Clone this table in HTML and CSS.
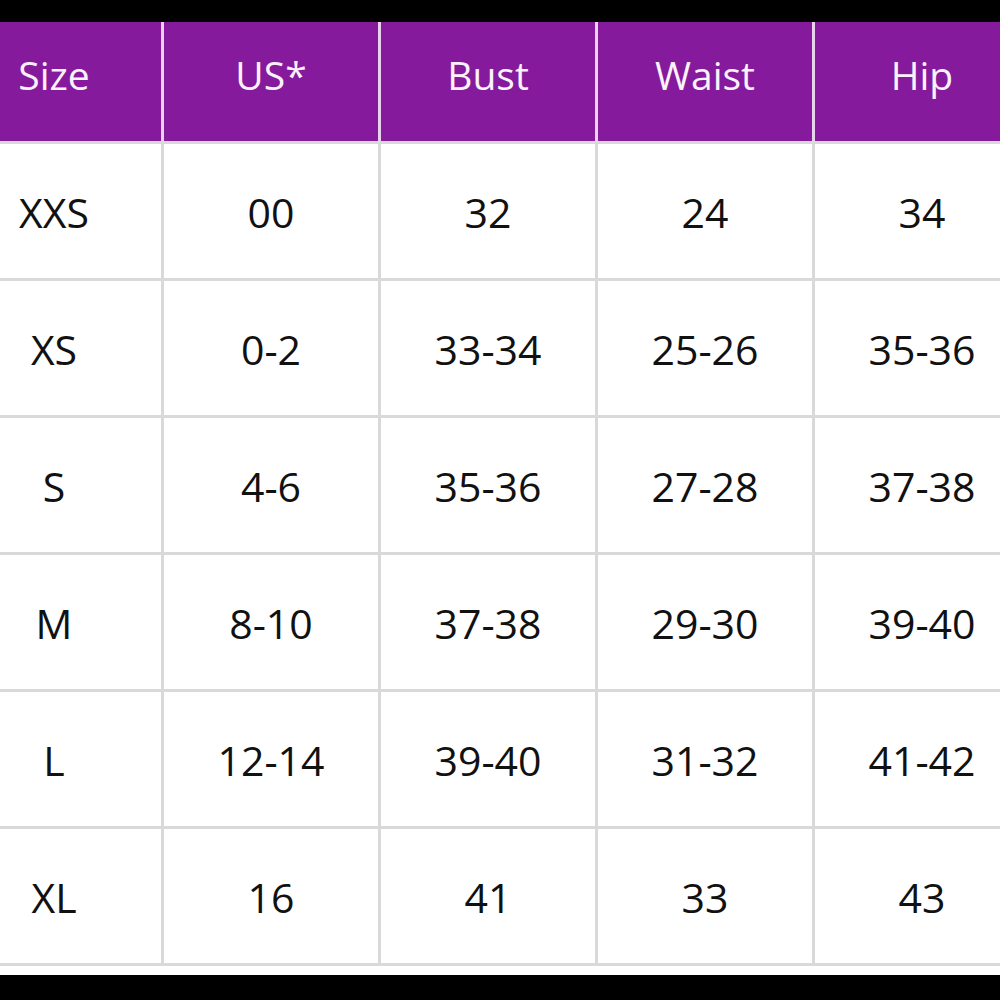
FILE: index.html
```html
<!DOCTYPE html>
<html>
<head>
<meta charset="utf-8">
<link rel="stylesheet" href="styles.css">
</head>
<body>
<div class="bar bar-top"></div>
<div class="chart">
  <div class="row head">
    <div class="cell">Size</div>
    <div class="cell">US*</div>
    <div class="cell">Bust</div>
    <div class="cell">Waist</div>
    <div class="cell">Hip</div>
  </div>
  <div class="row">
    <div class="cell">XXS</div><div class="cell">00</div><div class="cell">32</div><div class="cell">24</div><div class="cell">34</div>
  </div>
  <div class="row">
    <div class="cell">XS</div><div class="cell">0-2</div><div class="cell">33-34</div><div class="cell">25-26</div><div class="cell">35-36</div>
  </div>
  <div class="row">
    <div class="cell">S</div><div class="cell">4-6</div><div class="cell">35-36</div><div class="cell">27-28</div><div class="cell">37-38</div>
  </div>
  <div class="row">
    <div class="cell">M</div><div class="cell">8-10</div><div class="cell">37-38</div><div class="cell">29-30</div><div class="cell">39-40</div>
  </div>
  <div class="row">
    <div class="cell">L</div><div class="cell">12-14</div><div class="cell">39-40</div><div class="cell">31-32</div><div class="cell">41-42</div>
  </div>
  <div class="row">
    <div class="cell">XL</div><div class="cell">16</div><div class="cell">41</div><div class="cell">33</div><div class="cell">43</div>
  </div>
</div>
<div class="spacer"></div>
<div class="bar bar-bottom"></div>
</body>
</html>
```
FILE: styles.css
```css
html, body {
  margin: 0;
  padding: 0;
  background: #ffffff;
  width: 1000px;
  height: 1000px;
  overflow: hidden;
}
body {
  font-family: "Open Sans", "Liberation Sans", sans-serif;
  color: #111111;
  display: flex;
  flex-direction: column;
}
.bar {
  background: #000000;
  flex: none;
}
.bar-top {
  height: 22px;
}
.bar-bottom {
  flex: 1;
}
.chart {
  margin-left: -53px;
  width: 1085px;
  flex: none;
}
.row {
  display: grid;
  grid-template-columns: repeat(5, 217px);
  height: 137px;
  box-sizing: border-box;
  border-bottom: 3px solid #d9d9d9;
}
.cell {
  display: flex;
  align-items: center;
  justify-content: center;
  box-sizing: border-box;
  border-right: 3px solid #d9d9d9;
  font-size: 41px;
  font-weight: 380;
  line-height: 1;
  padding-top: 2px;
}
.head {
  height: 122px;
  background: #861a9d;
}
.head .cell {
  color: #faf2fb;
  border-right-color: #e8d2ec;
  font-size: 39px;
  font-weight: 380;
  padding-top: 0;
  padding-bottom: 14px;
}
.spacer {
  height: 9px;
  flex: none;
}
```
